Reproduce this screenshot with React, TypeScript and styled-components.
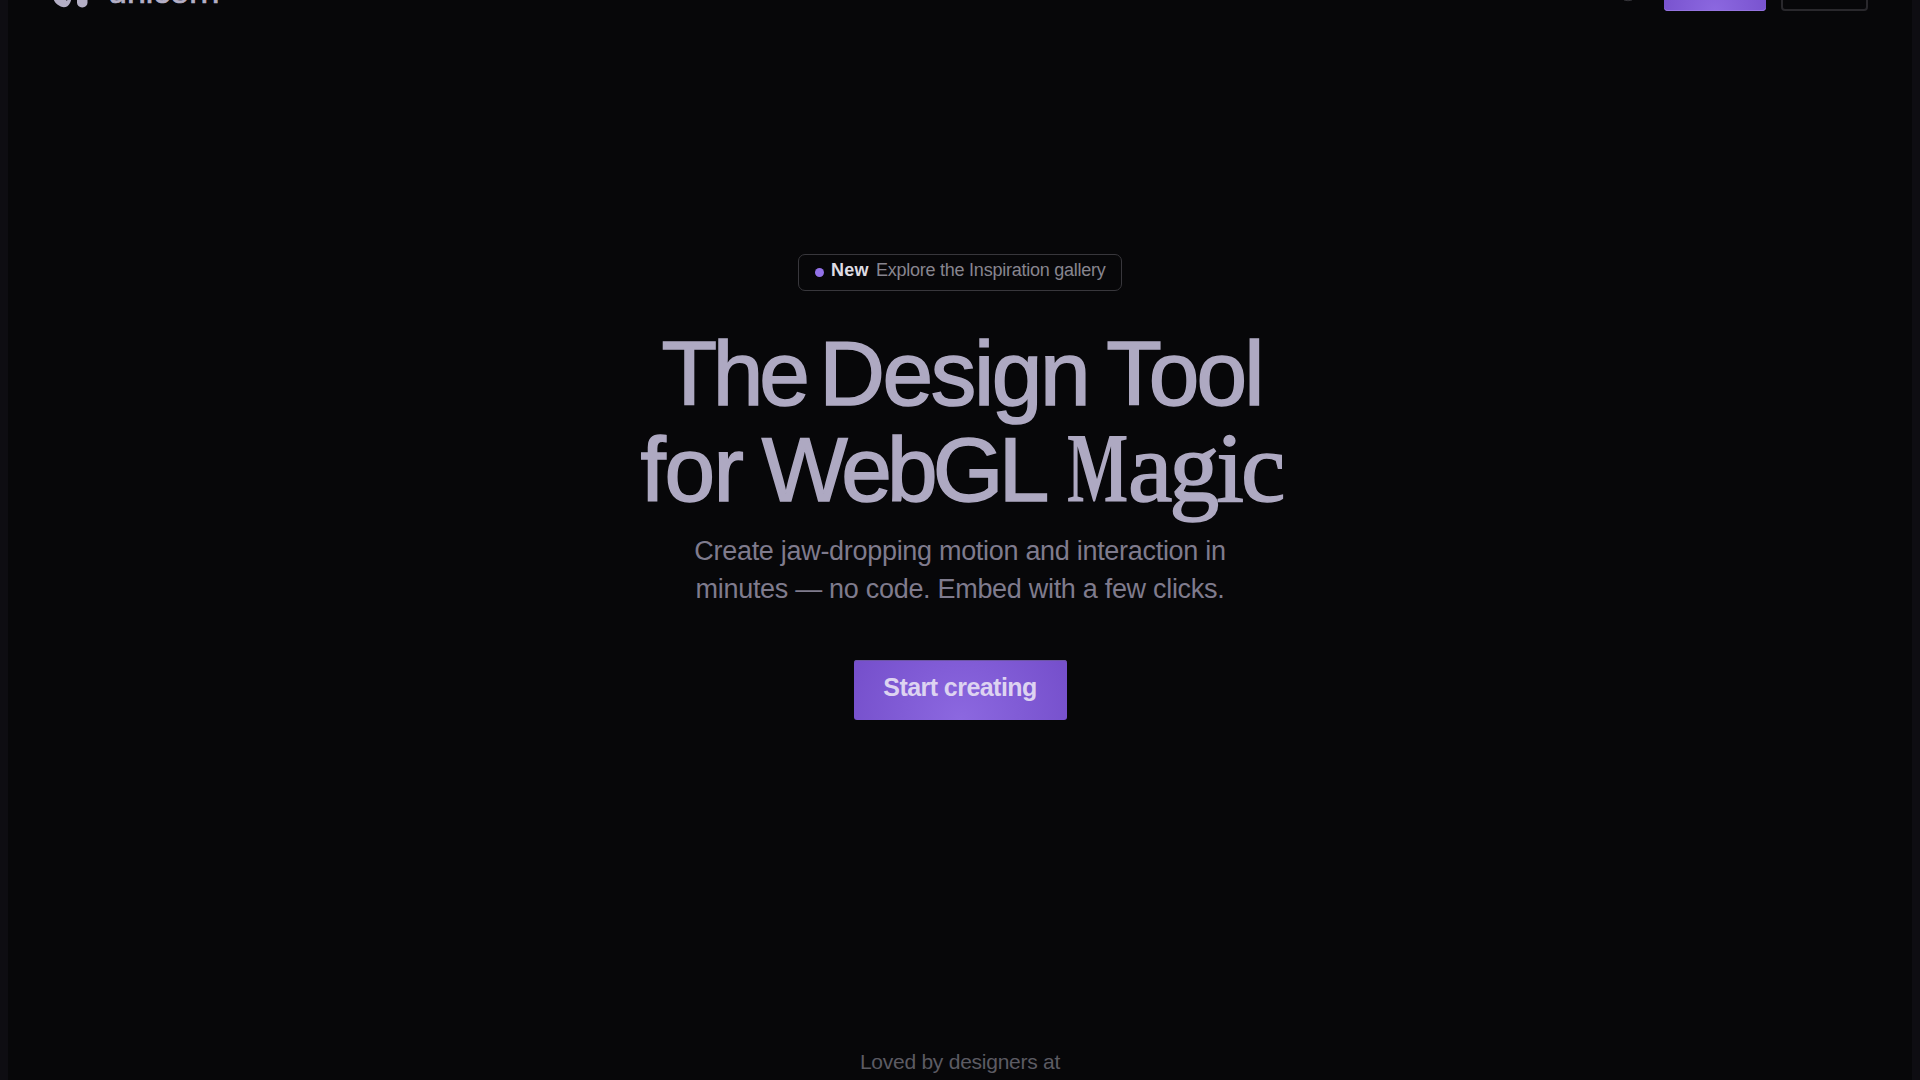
import { FC } from "react";
import styled, { createGlobalStyle } from "styled-components";

const App: FC = () => {
  return (
    <>
      <GlobalStyle />
      <Page>
        <Header>
          <Brand>
            <LogoMark viewBox="0 0 36 32">
              <path d="M0 0V22C1 25 3 28 6 29.5C10 32.5 15 31.5 17 27C18 25 18.5 23 18.5 20V0Z" />
              <path d="M13 25L15.5 20V23.5Z" fill="#070709" />
              <rect x="24" y="0" width="10.5" height="31.5" rx="5" />
            </LogoMark>
            <BrandName>unicorn</BrandName>
          </Brand>
          <Actions>
            <LinkTail viewBox="0 0 10 4">
              <path d="M1 0Q5 1.5 9 0" />
            </LinkTail>
            <NavButton $primary $width={102} />
            <NavButton $width={87} />
          </Actions>
        </Header>
        <Hero>
          <Pill>
            <Dot />
            <PillLabel>New</PillLabel>
            <PillText>Explore the Inspiration gallery</PillText>
          </Pill>
          <Title>
            <TitleLine>
              <Word $spacing={-4.2} $gap={-7.5}>The</Word>{" "}
              <Word $spacing={-2.4} $gap={-3}>Design</Word>{" "}
              <Word $spacing={-2.9}>Tool</Word>
            </TitleLine>
            <TitleLine>
              <Word $spacing={-1.4} $gap={-1.8}>for</Word>{" "}
              <Word $spacing={-4.8} $gap={0.8}>WebGL</Word>{" "}
              <Serif>
                <Narrow>M</Narrow>agic
              </Serif>
            </TitleLine>
          </Title>
          <Lead>
            Create jaw-dropping motion and interaction in
            <br />
            minutes — no code. Embed with a few clicks.
          </Lead>
          <StartButton>Start creating</StartButton>
        </Hero>
        <Loved>Loved by designers at</Loved>
      </Page>
    </>
  );
};

export default App;

const GlobalStyle = createGlobalStyle`
  * {
    box-sizing: border-box;
  }
  body {
    margin: 0;
    background: #0e0d12;
    font-family: "Liberation Sans", Arial, sans-serif;
    overflow: hidden;
  }
`;

const Page = styled.div`
  height: 1080px;
  margin: 0 8px;
  background: #070709;
  display: flex;
  flex-direction: column;
  align-items: center;
  overflow: hidden;
`;

const Header = styled.header`
  width: 100%;
  height: 48px;
  margin-top: -37px;
  padding: 0 44px 0 45px;
  display: flex;
  justify-content: space-between;
  flex-shrink: 0;
`;

const Brand = styled.div`
  display: flex;
  align-items: flex-start;
  gap: 19px;
  color: #b4afc6;
`;

const LogoMark = styled.svg`
  width: 36px;
  height: 32px;
  margin-top: 13px;
  fill: #b4afc6;
`;

const BrandName = styled.span`
  font-size: 34px;
  line-height: 40px;
  margin-top: 8px;
  -webkit-text-stroke: 0.7px #b4afc6;
`;

const Actions = styled.nav`
  display: flex;
  gap: 15px;
`;

const LinkTail = styled.svg`
  width: 10px;
  height: 4px;
  margin: 37px 16px 0 0;
  fill: none;
  stroke: #37363c;
  stroke-width: 1;
`;

const NavButton = styled.button<{ $primary?: boolean; $width: number }>`
  width: ${({ $width }) => $width}px;
  height: 48px;
  padding: 0;
  border-radius: 4px;
  border: ${({ $primary }) => ($primary ? "0" : "2px solid #29282c")};
  background: ${({ $primary }) =>
    $primary
      ? "radial-gradient(circle at 50% 100%, #8c68e0, #7650cc 60px)"
      : "transparent"};
  box-shadow: ${({ $primary }) =>
    $primary ? "inset 0 -1px #9474df" : "none"};
`;

const Hero = styled.main`
  display: flex;
  flex-direction: column;
  align-items: center;
  margin-top: 243px;
`;

const Pill = styled.div`
  width: 324px;
  height: 37px;
  border: 1px solid #38373c;
  border-radius: 7px;
  display: flex;
  align-items: center;
  padding: 0 0 1px 16px;
  font-size: 18px;
  line-height: 20px;
  white-space: nowrap;
`;

const Dot = styled.i`
  width: 9px;
  height: 9px;
  border-radius: 50%;
  background: #9271e8;
`;

const PillLabel = styled.b`
  margin: -4px 7px 0 7px;
  color: #dedce3;
  letter-spacing: 0.3px;
`;

const PillText = styled.span`
  margin-top: -4px;
  color: #87858f;
  letter-spacing: -0.24px;
`;

const Title = styled.h1`
  margin: 35px 0 0;
  padding-left: 3px;
  color: #aea9c2;
  font-size: 91px;
  font-weight: 400;
  line-height: 96px;
  text-align: center;
  -webkit-text-stroke: 1.6px #aea9c2;
`;

const TitleLine = styled.span`
  display: block;
  height: 96px;
  white-space: nowrap;
  word-spacing: -4.2px;
`;

const Word = styled.span<{ $spacing: number; $gap?: number }>`
  letter-spacing: ${({ $spacing }) => $spacing}px;
  margin-right: ${({ $gap = 0 }) => $gap}px;
`;

const Serif = styled.span`
  font-family: "Liberation Serif", "Times New Roman", serif;
  font-size: 100px;
  letter-spacing: -3px;
  line-height: 0;
`;

const Narrow = styled.span`
  display: inline-block;
  line-height: 0;
  font-weight: 700;
  transform: scaleX(0.65);
  transform-origin: left;
  margin-right: -30px;
  -webkit-text-stroke: 0;
`;

const Lead = styled.p`
  margin: 15px 0 0;
  color: #7f7b8d;
  font-size: 27px;
  line-height: 37.5px;
  letter-spacing: -0.3px;
  text-align: center;
`;

const StartButton = styled.button`
  width: 213px;
  height: 60px;
  margin-top: 52px;
  padding: 0 0 6px;
  border: 0;
  border-radius: 3px;
  color: #ddd3f1;
  background: radial-gradient(circle at 50% 100%, #8c68e0, #7650cc 115px);
  box-shadow: inset 0 1px #6c55a4;
  font: bold 25px "Liberation Sans", Arial, sans-serif;
  letter-spacing: -0.55px;
  white-space: nowrap;
`;

const Loved = styled.p`
  margin: 330px 0 0;
  color: #5c5b63;
  font-size: 21px;
  line-height: 24px;
  letter-spacing: -0.25px;
`;
